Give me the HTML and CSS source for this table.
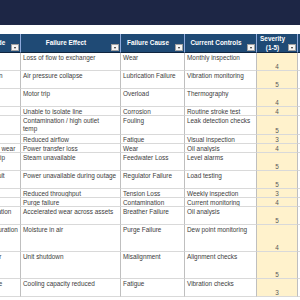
FILE: index.html
```html
<!DOCTYPE html>
<html>
<head>
<meta charset="utf-8">
<link rel="stylesheet" href="styles.css">
</head>
<body>
<div class="banner"></div>
<div class="sheet">
  <div class="row">
    <div class="h"><span>Failure Mode</span><span class="dd"></span></div>
    <div class="h"><span>Failure Effect</span><span class="dd"></span></div>
    <div class="h"><span>Failure Cause</span><span class="dd"></span></div>
    <div class="h"><span>Current Controls</span><span class="dd"></span></div>
    <div class="h"><span>Severity (1-5)</span><span class="dd"></span></div>
    <div class="h"></div>
  </div>
  <div class="row">
    <div class="c">Seal leak</div><div class="c">Loss of flow to exchanger</div><div class="c">Wear</div><div class="c">Monthly inspection</div><div class="c num">4</div><div class="c"></div>
  </div>
  <div class="row">
    <div class="c">Piston erosion</div><div class="c">Air pressure collapse</div><div class="c">Lubrication Failure</div><div class="c">Vibration monitoring</div><div class="c num">5</div><div class="c"></div>
  </div>
  <div class="row">
    <div class="c">Overheat</div><div class="c">Motor trip</div><div class="c">Overload</div><div class="c">Thermography</div><div class="c num">4</div><div class="c"></div>
  </div>
  <div class="row">
    <div class="c">Valve stuck</div><div class="c">Unable to isolate line</div><div class="c">Corrosion</div><div class="c">Routine stroke test</div><div class="c num">4</div><div class="c"></div>
  </div>
  <div class="row">
    <div class="c">Tube leak</div><div class="c">Contamination / high outlet<br>temp</div><div class="c">Fouling</div><div class="c">Leak detection checks</div><div class="c num">5</div><div class="c"></div>
  </div>
  <div class="row">
    <div class="c">Belt slip</div><div class="c">Reduced airflow</div><div class="c">Fatigue</div><div class="c">Visual inspection</div><div class="c num">3</div><div class="c"></div>
  </div>
  <div class="row">
    <div class="c">Bearing cage wear</div><div class="c">Power transfer loss</div><div class="c">Wear</div><div class="c">Oil analysis</div><div class="c num">4</div><div class="c"></div>
  </div>
  <div class="row">
    <div class="c">Feed pump trip</div><div class="c">Steam unavailable</div><div class="c">Feedwater Loss</div><div class="c">Level alarms</div><div class="c num">5</div><div class="c"></div>
  </div>
  <div class="row">
    <div class="c">Generator fault</div><div class="c">Power unavailable during outage</div><div class="c">Regulator Failure</div><div class="c">Load testing</div><div class="c num">5</div><div class="c"></div>
  </div>
  <div class="row">
    <div class="c">Belt stretch</div><div class="c">Reduced throughput</div><div class="c">Tension Loss</div><div class="c">Weekly inspection</div><div class="c num">3</div><div class="c"></div>
  </div>
  <div class="row">
    <div class="c">Fan fault</div><div class="c">Purge failure</div><div class="c">Contamination</div><div class="c">Current monitoring</div><div class="c num">4</div><div class="c"></div>
  </div>
  <div class="row">
    <div class="c">Oil contamination</div><div class="c">Accelerated wear across assets</div><div class="c">Breather Failure</div><div class="c">Oil analysis</div><div class="c num">5</div><div class="c"></div>
  </div>
  <div class="row">
    <div class="c">Absorber saturation</div><div class="c">Moisture in air</div><div class="c">Purge Failure</div><div class="c">Dew point monitoring</div><div class="c num">4</div><div class="c"></div>
  </div>
  <div class="row">
    <div class="c">Pump coupler</div><div class="c">Unit shutdown</div><div class="c">Misalignment</div><div class="c">Alignment checks</div><div class="c num">5</div><div class="c"></div>
  </div>
  <div class="row">
    <div class="c">Tubing fatigue</div><div class="c">Cooling capacity reduced</div><div class="c">Fatigue</div><div class="c">Vibration checks</div><div class="c num">3</div><div class="c"></div>
  </div>
</div>
</body>
</html>
```
FILE: styles.css
```css
* { box-sizing: border-box; }
html, body { margin: 0; padding: 0; background: #ffffff; overflow: hidden; }
body {
  width: 300px;
  height: 300px;
  font-family: "Liberation Sans", Arial, sans-serif;
  font-size: 6.4px;
  color: #3c3c3c;
}
.banner { height: 25px; background: #1d2645; }
.sheet {
  display: grid;
  grid-template-columns: 61px 100px 64px 72px 41px 60px;
  grid-template-rows: 19px 18px 18px 18px 9px 19px 9px 9px 18px 18px 9px 9px 18px 27px 27px 18px;
  margin: 9px 0 0 -40px;
  width: max-content;
}
.row { display: contents; }
.h {
  position: relative;
  display: flex;
  align-items: center;
  justify-content: center;
  text-align: center;
  padding: 1px 10px 0 1px;
  background: #1f4a75;
  color: #ffffff;
  font-weight: bold;
  line-height: 8.5px;
  border-right: 1px solid #8faadc;
  border-bottom: 1px solid #10253f;
  white-space: nowrap;
}
.h:nth-child(5) { white-space: normal; }
.dd {
  position: absolute;
  right: 1px;
  bottom: 1px;
  width: 8px;
  height: 7px;
  background: #f4f4f4;
  border: 1px solid #a0a0a0;
}
.dd::after {
  content: "";
  position: absolute;
  left: 1.5px;
  top: 2px;
  border-left: 1.5px solid transparent;
  border-right: 1.5px solid transparent;
  border-top: 2px solid #222;
}
.c {
  padding: 1px 2px 0;
  line-height: 7.5px;
  white-space: nowrap;
  overflow: hidden;
  border-right: 1px solid #bfbfbf;
  border-bottom: 1px solid #d9d9d9;
}
.num {
  display: flex;
  align-items: flex-end;
  justify-content: center;
  padding: 0 0 0.5px;
  background: #fff2cc;
  color: #595959;
  line-height: 7px;
}
```
